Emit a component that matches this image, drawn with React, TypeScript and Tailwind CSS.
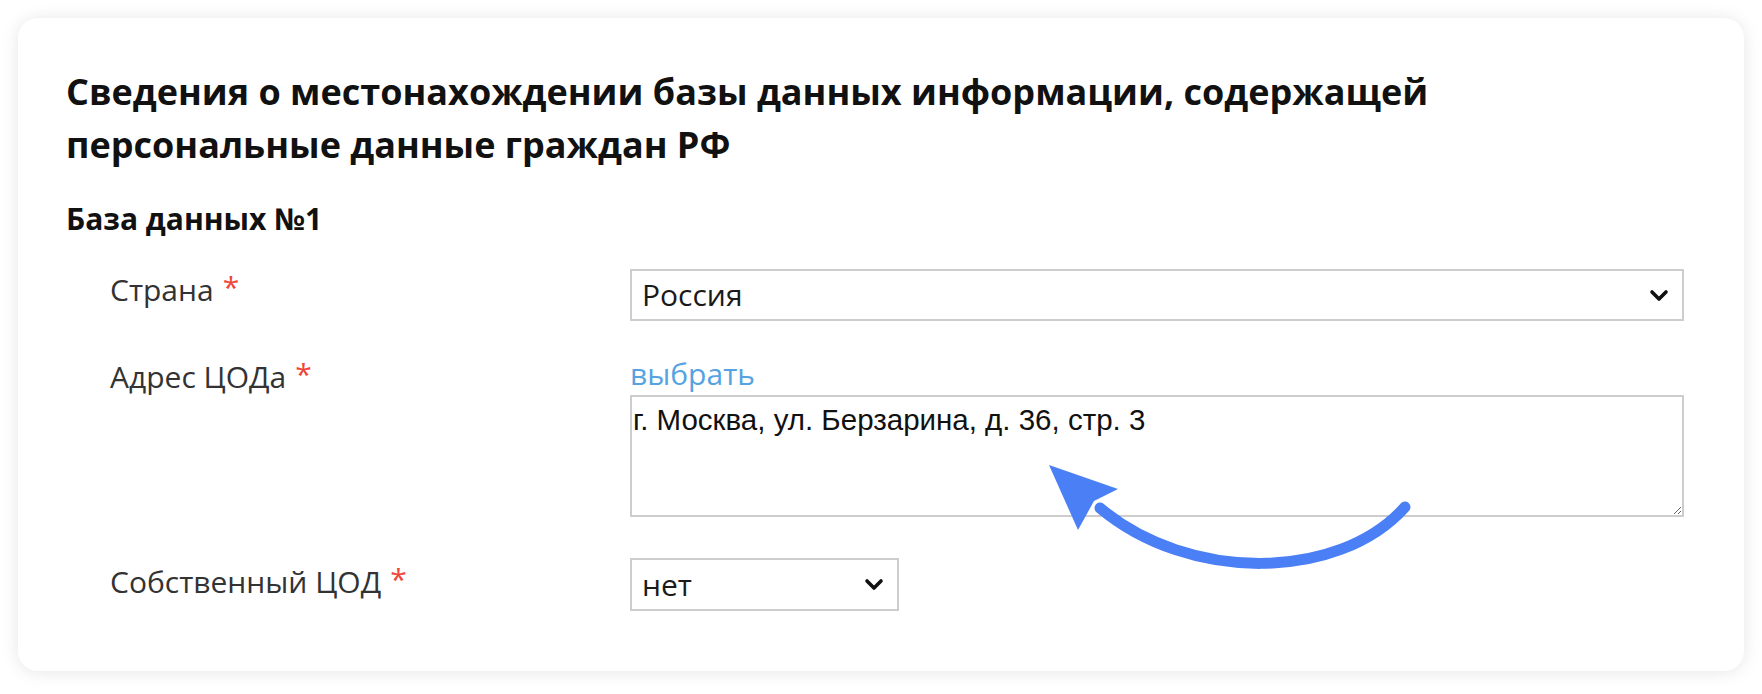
const SANS = "font-['Open_Sans',_'Noto_Sans',_sans-serif]"

function Chevron() {
  return (
    <svg width="20" height="13" viewBox="0 0 20 13" fill="none">
      <path d="M3 3 L10 10 L17 3" stroke="#111" strokeWidth="3.6" strokeLinecap="round" strokeLinejoin="round" />
    </svg>
  )
}

function Label({ text }: { text: string }) {
  return (
    <span className="text-[30px] leading-[40px] text-[#333]">
      {text}
      <span className="relative -top-[3px] ml-[9px] text-[#f04438]">*</span>
    </span>
  )
}

function FakeSelect({ value, width }: { value: string; width: string }) {
  return (
    <div className={`${width} flex items-center justify-between border-2 border-[#cdcdcd] bg-white pl-[10px] pr-[13px]`}>
      <span className="text-[30px] leading-[40px] text-[#1a1a1a]">{value}</span>
      <Chevron />
    </div>
  )
}

export default function App() {
  return (
    <div className={`min-h-screen bg-white p-[18px] ${SANS}`}>
      <div className="relative h-[653px] rounded-[20px] bg-white pt-[47px] pl-[48px] pr-[56px] shadow-[0_1px_18px_rgba(0,0,0,0.1)]">
        <h1 className="text-[36px] leading-[53px] font-bold text-[#111]">
          Сведения о местонахождении базы данных информации, содержащей
          <br />
          персональные данные граждан РФ
        </h1>
        <h2 className="mt-[30px] text-[30px] leading-[36px] font-bold text-[#111]">База данных №1</h2>

        <div className="pl-[44px]">
          <div className="mt-[32px] flex">
            <div className="w-[520px] pt-[1px]">
              <Label text="Страна" />
            </div>
            <FakeSelect value="Россия" width="w-[1054px] h-[52px]" />
          </div>

          <div className="mt-[33px] flex">
            <div className="w-[520px] pt-[3px]">
              <Label text="Адрес ЦОДа" />
            </div>
            <div className="flex w-[1054px] flex-col">
              <span className="text-[30px] leading-[40px] text-[#55a3e0]">выбрать</span>
              <textarea
                readOnly
                defaultValue="г. Москва, ул. Берзарина, д. 36, стр. 3"
                className="mt-[1px] h-[122px] w-full resize border-2 border-[#cdcdcd] bg-white pt-[6px] pl-[1px] font-['Liberation_Sans',_Arial,_sans-serif] text-[29.5px] leading-[34px] text-[#111] outline-none"
              />
            </div>
          </div>

          <div className="mt-[41px] flex">
            <div className="w-[520px] pt-[4px]">
              <Label text="Собственный ЦОД" />
            </div>
            <FakeSelect value="нет" width="w-[269px] h-[53px]" />
          </div>
        </div>

        {/* annotation arrow */}
        <svg className="absolute left-[1020px] top-[430px]" width="400" height="140" viewBox="0 0 400 140" fill="none">
          <path d="M367 59 C300 134, 150 134, 62 60" stroke="#4b7ff5" strokeWidth="11" strokeLinecap="round" />
          <polygon points="11,17 80,41 56,53 40,82" fill="#4b7ff5" />
        </svg>
      </div>
    </div>
  )
}
